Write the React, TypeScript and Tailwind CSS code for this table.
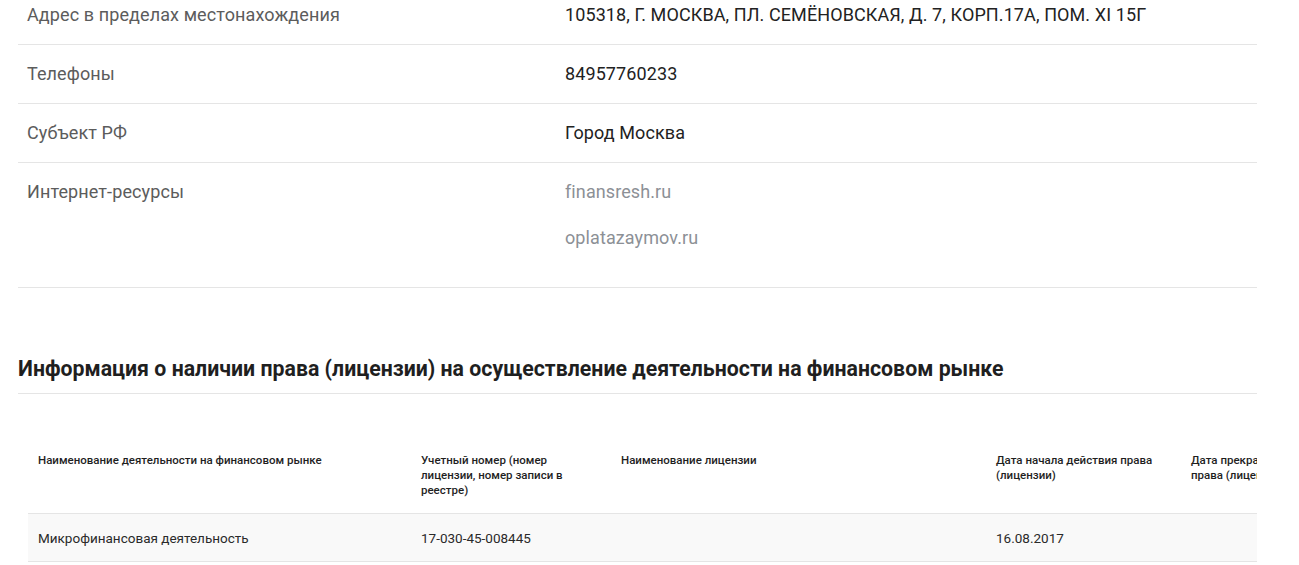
import React from "react";

const rows = [
  { label: "Адрес в пределах местонахождения", value: ["105318, Г. МОСКВА, ПЛ. СЕМЁНОВСКАЯ, Д. 7, КОРП.17А, ПОМ. XI 15Г"] },
  { label: "Телефоны", value: ["84957760233"] },
  { label: "Субъект РФ", value: ["Город Москва"] },
  { label: "Интернет-ресурсы", value: ["finansresh.ru", "oplatazaymov.ru"], link: true },
];

const cols = [
  { title: "Наименование деятельности на финансовом рынке", w: "w-[383px]", value: "Микрофинансовая деятельность" },
  { title: "Учетный номер (номер лицензии, номер записи в реестре)", w: "w-[200px]", value: "17-030-45-008445" },
  { title: "Наименование лицензии", w: "w-[375px]", value: "" },
  { title: "Дата начала действия права (лицензии)", w: "w-[195px]", value: "16.08.2017" },
  { title: "Дата прекращения действия права (лицензии)", w: "w-[195px]", value: "" },
];

export default function App() {
  return (
    <div className="bg-white w-[1299px] h-[565px] overflow-hidden font-['Roboto',sans-serif]">
      <div className="ml-[18px] w-[1239px] -mt-[14px]">
        {rows.map((r, i) => (
          <div
            key={i}
            className={
              r.link
                ? "grid grid-cols-[547px_1fr] border-b border-[#e5e5e5] pt-[20px] pb-[40px]"
                : "grid grid-cols-[547px_1fr] border-b border-[#e5e5e5] py-[20px]"
            }
          >
            <div className="pl-[9px] text-[18px] leading-[18px] tracking-[0.1px] text-[#5c5c5c]">{r.label}</div>
            <div className="flex flex-col gap-[28px]">
              {r.value.map((v) => (
                <div
                  key={v}
                  className={
                    r.link
                      ? "text-[18px] leading-[18px] tracking-[0.1px] text-[#8c9096]"
                      : "text-[18px] leading-[18px] tracking-[0.1px] text-[#222222]"
                  }
                >
                  {v}
                </div>
              ))}
            </div>
          </div>
        ))}

        <h2 className="mt-[69px] pb-[12px] border-b border-[#e5e5e5] text-[21.3px] leading-[24px] font-bold text-[#1f1f1f]">
          Информация о наличии права (лицензии) на осуществление деятельности на финансовом рынке
        </h2>

        <div className="mt-[45px] ml-[10px] overflow-hidden">
          <div className="flex w-max border-b border-[#e5e5e5] pt-[14px] pb-[15px]">
            {cols.map((c) => (
              <div key={c.title} className={`${c.w} pl-[10px] pr-[24px] text-[11.5px] leading-[15px] font-medium text-[#1f1f1f]`}>
                {c.title}
              </div>
            ))}
          </div>
          <div className="flex w-max bg-[#f9f9f9] border-b border-[#e5e5e5] h-[48px] items-center">
            {cols.map((c) => (
              <div key={c.title} className={`${c.w} pl-[10px] text-[13.5px] leading-[16px] text-[#2a2a2a]`}>
                {c.value}
              </div>
            ))}
          </div>
        </div>
      </div>
    </div>
  );
}
